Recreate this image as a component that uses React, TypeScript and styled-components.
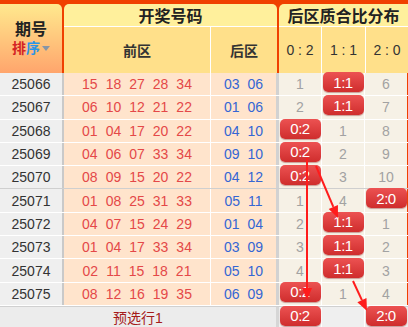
import React from 'react';
import styled, { createGlobalStyle } from 'styled-components';

const GlobalStyle = createGlobalStyle`
  body {
    margin: 0;
    font-family: "Liberation Sans", "Noto Sans CJK SC", sans-serif;
    background: #ffffff;
  }
`;

const Board = styled.div`
  position: relative;
  width: 408px;
  height: 327px;
  overflow: hidden;
  background: #f04000;
`;

const Header = styled.div`
  display: flex;
  gap: 2px;
  padding-top: 4px;
  height: 69px;
`;

const IdTab = styled.div`
  width: 62px;
  border-top-right-radius: 5px;
  background: linear-gradient(#ffe98e, #ffa56c);
  display: flex;
  flex-direction: column;
  align-items: center;
  padding-top: 17px;
  box-sizing: border-box;
`;

const IdTitle = styled.div`
  font-size: 16px;
  font-weight: bold;
  color: #222;
  line-height: 17px;
`;

const SortLink = styled.div`
  margin-top: 2px;
  font-size: 14px;
  font-weight: bold;
  line-height: 16px;
  display: flex;
  align-items: center;
`;

const SortChar = styled.span<{ $tone: string }>`
  color: ${p => p.$tone};
`;

const Caret = styled.span`
  width: 0;
  height: 0;
  margin-left: 2px;
  border-left: 4px solid transparent;
  border-right: 4px solid transparent;
  border-top: 5px solid #8795a6;
`;

const GroupTab = styled.div<{ $width: number; $left?: boolean }>`
  width: ${p => p.$width}px;
  border-top-left-radius: 5px;
  border-top-right-radius: ${p => (p.$left ? 5 : 0)}px;
  overflow: hidden;
  display: flex;
  flex-direction: column;
`;

const GroupTitle = styled.div`
  height: 22px;
  background: #fff09c;
  border-bottom: 1px solid #ffffff;
  display: flex;
  align-items: center;
  justify-content: center;
  font-size: 16px;
  font-weight: bold;
  color: #222;
`;

const SubRow = styled.div`
  flex: 1;
  display: flex;
  background: #ffe08a;
`;

const SubCell = styled.div<{ $width: number; $bold?: boolean }>`
  width: ${p => p.$width}px;
  box-sizing: border-box;
  border-right: 1px solid #ffffff;
  display: flex;
  align-items: center;
  justify-content: center;
  font-size: 14px;
  font-weight: ${p => (p.$bold ? 'bold' : 'normal')};
  color: #333;
  white-space: pre;
  &:last-child {
    border-right: none;
  }
`;

const Row = styled.div<{ $split?: boolean }>`
  display: flex;
  height: 23.3px;
  box-sizing: border-box;
  border-bottom: ${p => (p.$split ? '1px solid #cfcfcf' : '1px solid #ffffff')};
`;

const IdCell = styled.div`
  width: 64px;
  box-sizing: border-box;
  background: #efefef;
  border-right: 2px solid #c9c9c9;
  display: flex;
  align-items: center;
  justify-content: center;
  font-size: 14px;
  color: #333;
`;

const BallCell = styled.div<{ $width: number; $edge: string }>`
  width: ${p => p.$width}px;
  box-sizing: border-box;
  background: #ffe4cc;
  border-right: ${p => p.$edge};
  display: flex;
  align-items: center;
  justify-content: center;
`;

const Ball = styled.span<{ $blue?: boolean }>`
  font-size: 14px;
  margin: 0 4px;
  color: ${p => (p.$blue ? '#3466d4' : '#e44848')};
`;

const RatioCell = styled.div<{ $bg?: string }>`
  width: 43px;
  box-sizing: border-box;
  background: ${p => p.$bg || '#f6f1e6'};
  border-right: 1px solid #ffffff;
  display: flex;
  align-items: center;
  justify-content: center;
  font-size: 14px;
  color: #a2a2a2;
  &:last-child {
    border-right: none;
    width: 42px;
  }
`;

const Badge = styled.div`
  position: relative;
  z-index: 1;
  align-self: flex-start;
  margin-top: -1px;
  width: 41px;
  height: 20px;
  border-radius: 5px;
  background: linear-gradient(#ec5252, #cf2d2d);
  box-shadow: 0 1px 1px rgba(120, 0, 0, 0.35);
  color: #ffffff;
  font-size: 15px;
  letter-spacing: -0.5px;
  display: flex;
  align-items: center;
  justify-content: center;
`;

const Footer = styled.div`
  display: flex;
  height: 20px;
  border-top: 1px solid #d0d0d0;
  background: #ececec;
`;

const FooterLabel = styled.div`
  width: 276px;
  border-right: 3px solid #d6d6d6;
  display: flex;
  align-items: center;
  justify-content: center;
  font-size: 14px;
  color: #a51a1a;
`;

const Arrows = styled.svg`
  position: absolute;
  left: 0;
  top: 0;
  pointer-events: none;
  z-index: 2;
`;

type Draw = { id: string; front: string[]; back: string[]; ratio: number; counts: string[] };

const rows: Draw[] = [
  { id: '25066', front: ['15', '18', '27', '28', '34'], back: ['03', '06'], ratio: 1, counts: ['1', '', '6'] },
  { id: '25067', front: ['06', '10', '12', '21', '22'], back: ['01', '06'], ratio: 1, counts: ['2', '', '7'] },
  { id: '25068', front: ['01', '04', '17', '20', '22'], back: ['04', '10'], ratio: 0, counts: ['', '1', '8'] },
  { id: '25069', front: ['04', '06', '07', '33', '34'], back: ['09', '10'], ratio: 0, counts: ['', '2', '9'] },
  { id: '25070', front: ['08', '09', '15', '20', '22'], back: ['04', '12'], ratio: 0, counts: ['', '3', '10'] },
  { id: '25071', front: ['01', '08', '25', '31', '33'], back: ['05', '11'], ratio: 2, counts: ['1', '4', ''] },
  { id: '25072', front: ['04', '07', '15', '24', '29'], back: ['01', '04'], ratio: 1, counts: ['2', '', '1'] },
  { id: '25073', front: ['01', '04', '17', '33', '34'], back: ['03', '09'], ratio: 1, counts: ['3', '', '2'] },
  { id: '25074', front: ['02', '11', '15', '18', '21'], back: ['05', '10'], ratio: 1, counts: ['4', '', '3'] },
  { id: '25075', front: ['08', '12', '16', '19', '35'], back: ['06', '09'], ratio: 0, counts: ['', '1', '4'] },
];

const labels = ['0:2', '1:1', '2:0'];

// arrow overlay: line from (x1,y1) with a filled head at (x2,y2)
function Arrow({ x1, y1, x2, y2 }: { x1: number; y1: number; x2: number; y2: number }) {
  const len = Math.hypot(x2 - x1, y2 - y1);
  const ux = (x2 - x1) / len;
  const uy = (y2 - y1) / len;
  const bx = x2 - ux * 12;
  const by = y2 - uy * 12;
  const px = -uy * 5;
  const py = ux * 5;
  return (
    <g>
      <line x1={x1} y1={y1} x2={bx} y2={by} stroke="#ff1c1c" strokeWidth={2} />
      <polygon points={`${x2},${y2} ${bx + px},${by + py} ${bx - px},${by - py}`} fill="#ff1c1c" />
    </g>
  );
}

export default function App() {
  return (
    <Board>
      <GlobalStyle />
      <Header>
        <IdTab>
          <IdTitle>期号</IdTitle>
          <SortLink>
            <SortChar $tone="#d42424">排</SortChar>
            <SortChar $tone="#2b95e6">序</SortChar>
            <Caret />
          </SortLink>
        </IdTab>
        <GroupTab $width={213} $left>
          <GroupTitle>开奖号码</GroupTitle>
          <SubRow>
            <SubCell $width={147} $bold>前区</SubCell>
            <SubCell $width={66} $bold>后区</SubCell>
          </SubRow>
        </GroupTab>
        <GroupTab $width={129}>
          <GroupTitle>后区质合比分布</GroupTitle>
          <SubRow>
            <SubCell $width={43}>0 : 2</SubCell>
            <SubCell $width={44}>1 : 1</SubCell>
            <SubCell $width={42}>2 : 0</SubCell>
          </SubRow>
        </GroupTab>
      </Header>

      {rows.map((r, i) => (
        <Row key={r.id} $split={i === 4}>
          <IdCell>{r.id}</IdCell>
          <BallCell $width={147} $edge="1px solid #ffffff">
            {r.front.map((n, k) => (
              <Ball key={k}>{n}</Ball>
            ))}
          </BallCell>
          <BallCell $width={68} $edge="3px solid #d2d2d2">
            {r.back.map((n, k) => (
              <Ball key={k} $blue>
                {n}
              </Ball>
            ))}
          </BallCell>
          {labels.map((lab, k) => (
            <RatioCell key={lab}>{k === r.ratio ? <Badge>{lab}</Badge> : r.counts[k]}</RatioCell>
          ))}
        </Row>
      ))}

      <Footer>
        <FooterLabel>预选行1</FooterLabel>
        <RatioCell $bg="#efefef">
          <Badge>0:2</Badge>
        </RatioCell>
        <RatioCell $bg="#efefef" />
        <RatioCell $bg="#efefef">
          <Badge>2:0</Badge>
        </RatioCell>
      </Footer>

      <Arrows width={408} height={327}>
        <Arrow x1={307} y1={158} x2={307} y2={300} />
        <Arrow x1={316} y1={166} x2={338} y2={218} />
        <Arrow x1={353} y1={281} x2={367} y2={311} />
      </Arrows>
    </Board>
  );
}
